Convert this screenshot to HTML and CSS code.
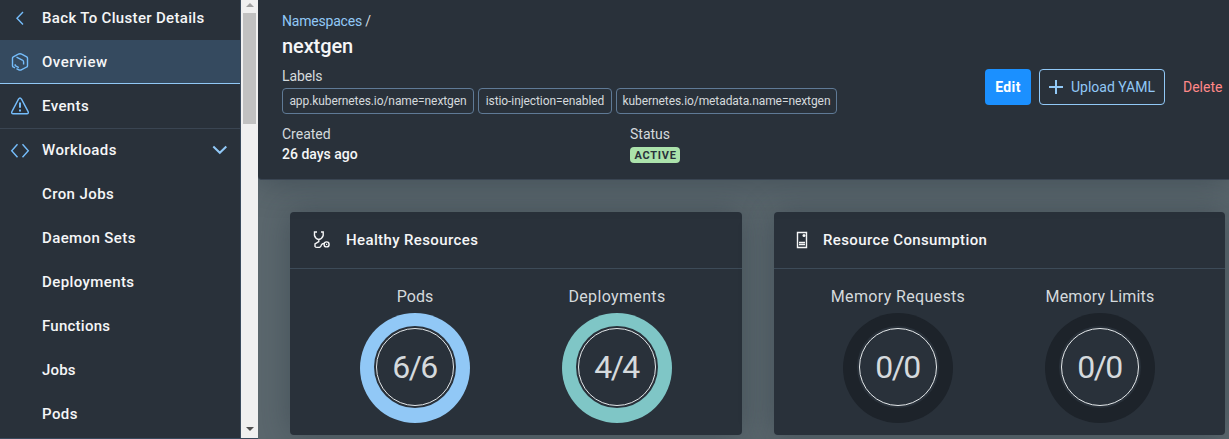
FILE: index.html
```html
<!DOCTYPE html>
<html lang="en">
<head>
<meta charset="utf-8">
<title>nextgen - Namespaces</title>
<link rel="stylesheet" href="styles.css">
</head>
<body>
<div class="app">
  <aside class="side">
    <nav class="nav">
      <a class="nav-item nav-back"><svg class="nav-icon" viewBox="0 0 20 20"><path d="M13 4 7 10.2l6 6.2"/></svg><span class="t-back">Back To Cluster Details</span></a>
      <a class="nav-item active"><svg class="nav-icon" viewBox="0 0 20 20"><path d="M8.300 2.200 3.300 4.800Q2.500 5.200 2.500 6.100V13.700Q2.500 14.600 3.300 15L5 15.900M8.300 2.200Q10 1.200 11.700 2.200L16.700 4.800Q17.500 5.300 17.500 6.200V13.700Q17.500 14.600 16.700 15L11.700 17.700Q10 18.600 8.400 17.700L6.500 16.700M6.500 5.200 12.300 8Q13.600 8.700 13.600 10V12.600M5.200 12.200V13.700L8.800 15.600"/></svg><span class="t-overview">Overview</span></a>
      <a class="nav-item ruled"><svg class="nav-icon" viewBox="0 0 20 20"><path d="M8.500 3.200q1.500-2.400 3 0l6.600 12.400q.9 2.100-1.300 2.100H3.200q-2.200 0-1.300-2.100z"/><path class="thick" d="M10 6.500v5.300M10 13.600v1.800"/></svg><span class="t-events">Events</span></a>
      <a class="nav-item"><svg class="nav-icon" viewBox="0 0 20 20"><path d="M7.500 4.300 1.700 10.800l5.800 6.500M12.500 4.300l5.800 6.500-5.800 6.500"/></svg><span class="t-workloads">Workloads</span><svg class="chev" viewBox="0 0 16 10"><path d="m1.300 1.500 6.500 6.300 6.500-6.300"/></svg></a>
      <a class="nav-item sub"><span class="t-cron">Cron Jobs</span></a>
      <a class="nav-item sub"><span class="t-daemon">Daemon Sets</span></a>
      <a class="nav-item sub"><span class="t-deploy">Deployments</span></a>
      <a class="nav-item sub"><span class="t-func">Functions</span></a>
      <a class="nav-item sub"><span class="t-jobs">Jobs</span></a>
      <a class="nav-item sub"><span class="t-pods">Pods</span></a>
    </nav>
    <div class="scrollbar"><i class="arrow up"></i><i class="thumb"></i><i class="arrow down"></i></div>
  </aside>
  <main class="main">
    <header class="head">
      <div class="info">
        <div class="crumb"><a>Namespaces</a> /</div>
        <h1 class="title"><span>nextgen</span></h1>
        <div class="caption cap-labels">Labels</div>
        <div class="tokens">
          <span class="token tk1"><b>app.kubernetes.io/name=nextgen</b></span><span class="token tk2"><b>istio-injection=enabled</b></span><span class="token tk3"><b>kubernetes.io/metadata.name=nextgen</b></span>
        </div>
        <div class="facts">
          <div class="fact"><div class="caption"><span>Created</span></div><div class="value"><span>26 days ago</span></div></div>
          <div class="fact"><div class="caption"><span>Status</span></div><div class="badge"><span>ACTIVE</span></div></div>
        </div>
      </div>
      <div class="actions">
        <button class="btn edit">Edit</button>
        <button class="btn upload"><svg class="plus" viewBox="0 0 14 14"><path d="M7 0v14M0 7h14"/></svg><span>Upload YAML</span></button>
        <button class="btn delete"><span>Delete</span></button>
      </div>
    </header>
    <div class="cards">
      <section class="card">
        <div class="card-head"><svg class="card-icon" viewBox="0 0 18 18"><path d="M4 1H1.500V4.500Q2.500 8 5.800 8.500 9 8 10.200 4.500V1H8M5.800 8.500V10.500L2 13V15.500Q2.500 16.400 4 16.400H6.500Q8 16 8.500 13.700 9 12.500 11 12.500"/><circle cx="13.600" cy="13.400" r="2.500"/><path d="M13 13.400h1.200"/></svg><span class="t-healthy">Healthy Resources</span></div>
        <div class="charts">
          <div class="chart"><div class="name n-pods"><span>Pods</span></div><div class="ring blue"><div class="hole"><div class="dial"><span>6/6</span></div></div></div></div>
          <div class="chart"><div class="name n-dep"><span>Deployments</span></div><div class="ring teal"><div class="hole"><div class="dial"><span>4/4</span></div></div></div></div>
        </div>
      </section>
      <section class="card">
        <div class="card-head"><svg class="card-icon" viewBox="0 0 18 18"><path d="M4.500 1.500h9v15h-9zM6 11.500h6M6 13.500h6"/><circle class="dot" cx="11" cy="4.500" r="1.500"/></svg><span class="t-resource">Resource Consumption</span></div>
        <div class="charts">
          <div class="chart"><div class="name n-req"><span>Memory Requests</span></div><div class="ring"><div class="hole"><div class="dial"><span>0/0</span></div></div></div></div>
          <div class="chart"><div class="name n-lim"><span>Memory Limits</span></div><div class="ring"><div class="hole"><div class="dial"><span>0/0</span></div></div></div></div>
        </div>
      </section>
    </div>
  </main>
</div>
</body>
</html>
```
FILE: styles.css
```css
* { box-sizing: border-box; }
body { margin: 0; background: #5b676d; color: #f5f6f7; font-family: Roboto, "Noto Sans", sans-serif; font-size: 15px; overflow: hidden; }
svg { display: block; flex: none; fill: none; stroke: currentColor; }
.app { display: flex; width: 1229px; height: 439px; }
.side { display: flex; flex: none; position: relative; z-index: 1; width: 258px; height: 439px; background: #29313a; border-bottom: 1px solid #3a4a5c; }
.nav { width: 241px; border-right: 1px solid #3a4a5c; overflow: hidden; }
.nav-item { display: flex; align-items: center; height: 44px; padding-left: 10px; font-weight: 500; font-size: 15px; line-height: 20px; letter-spacing: .4px; white-space: nowrap; }
.nav-back { height: 40px; padding-bottom: 4px; letter-spacing: .33px; }
.nav-icon { width: 20px; height: 20px; margin-right: 12px; color: #75bdfb; stroke-width: 1.4; }
.thick { stroke-width: 2; }
.active { background: #354a5f; border-bottom: 1px solid #91c8f6; letter-spacing: .5px; }
.ruled { border-bottom: 1px solid #3a4552; height: 45px; }
.ruled + .nav-item { height: 43px; padding-bottom: 2px; }
.t-func { letter-spacing: .25px; }
.t-jobs { letter-spacing: .15px; }
.sub { padding-left: 42px; }
.chev { width: 16px; height: 10px; color: #91c8f6; stroke-width: 2; margin-left: auto; margin-right: 12px; }
.scrollbar { width: 17px; display: flex; flex-direction: column; align-items: center; background: #f0f0f0; padding: 3px 0 7px; }
.arrow { width: 0; height: 0; border: 4px solid transparent; }
.up { border-top: 0; border-bottom-color: #a0a0a0; }
.down { border-bottom: 0; border-top-color: #505050; margin-top: auto; }
.thumb { width: 13px; height: 111px; margin-top: 6px; background: #c1c1c1; }
.main { flex: 1; min-width: 0; }
.head { display: flex; position: relative; height: 180px; padding: 11px 0 0 24px; background: #29313a; border-bottom: 1px solid #3a4552; border-bottom-left-radius: 4px; box-shadow: 0 0 32px rgba(35, 49, 61, .5); }
.info { width: 700px; flex: none; }
.crumb { height: 21px; line-height: 21px; font-size: 14px; letter-spacing: -.2px; color: #d5dadd; }
.crumb a { color: #91c8f6; }
.title { margin: 0; height: 28px; line-height: 28px; font-size: 20px; font-weight: 500; letter-spacing: -.1px; }
.caption { height: 18px; line-height: 18px; font-size: 14px; color: #d5dadd; }
.cap-labels { margin-top: 7px; letter-spacing: -.1px; }
.tokens { display: flex; gap: 4px; margin-top: 3px; }
.token { display: flex; justify-content: center; align-items: center; height: 26px; border: 1px solid #5f7a96; border-radius: 4px; font-size: 12px; letter-spacing: -.08px; color: #d5dadd; white-space: nowrap; }
.token b { font-weight: 400; }
.tk1 { width: 192px; }
.tk2 { width: 134px; }
.tk3 { width: 221px; }
.facts { display: flex; margin-top: 11px; }
.fact { width: 348px; }
.value { height: 20px; line-height: 20px; margin-top: 1px; font-size: 14px; font-weight: 500; }
.badge { display: flex; justify-content: center; align-items: center; width: 50px; height: 16px; margin-top: 4px; border-radius: 4px; background: #abe2ab; color: #29313a; font-size: 11px; font-weight: 700; letter-spacing: .75px; padding-left: 1px; }
.actions { display: flex; gap: 8px; margin: 58px 0 0 3px; }
.btn { display: flex; align-items: center; justify-content: center; height: 36px; padding: 0; border: 1px solid transparent; border-radius: 4px; background: none; font: 400 14px Roboto, sans-serif; white-space: nowrap; }
.edit { width: 46px; background: #1b90ff; color: #fff; font-weight: 700; letter-spacing: .4px; }
.upload { width: 126px; border-color: #91c8f6; color: #91c8f6; gap: 8px; }
.plus { width: 14px; height: 14px; stroke-width: 2; }
.delete { color: #ff8888; padding-left: 9px; }
.cards { display: flex; gap: 32px; padding: 32px 0 0 32px; }
.card { flex: none; width: 452px; height: 223px; border-radius: 4px; background: #29313a; box-shadow: 0 0 32px rgba(35, 49, 61, .42); }
.card + .card { width: 451px; }
.card-head { display: flex; align-items: center; height: 57px; padding-left: 23px; border-bottom: 1px solid #3d4b58; font-weight: 500; letter-spacing: .38px; }
.card-icon { width: 18px; height: 18px; margin-right: 15px; stroke-width: 1.400; }
.card + .card .card-head { padding-left: 19px; }
.card + .card .card-icon { margin-right: 12px; }
.dot { fill: currentColor; stroke: none; }
.charts { display: flex; padding-left: 24px; }
.card + .card .charts { padding-left: 23px; }
.chart { width: 202px; display: flex; flex-direction: column; align-items: center; padding-top: 17px; }
.name { height: 22px; line-height: 22px; margin-bottom: 5px; font-size: 16px; color: #d5dadd; white-space: nowrap; }
.n-dep, .n-req { letter-spacing: .35px; }
.n-lim { letter-spacing: .17px; }
.ring { display: flex; align-items: center; justify-content: center; width: 110px; height: 110px; border-radius: 50%; background: #1d232a; }
.blue { background: #91c8f6; }
.teal { background: #7fc6c6; }
.hole { display: flex; align-items: center; justify-content: center; width: 82px; height: 82px; margin-bottom: 2px; border-radius: 50%; background: #29313a; }
.dial { display: flex; align-items: center; justify-content: center; width: 78px; height: 78px; border: 1px solid #e4e8ea; border-radius: 50%; font-size: 32px; letter-spacing: -1.5px; padding-right: 1px; color: #d5dadd; }
```
